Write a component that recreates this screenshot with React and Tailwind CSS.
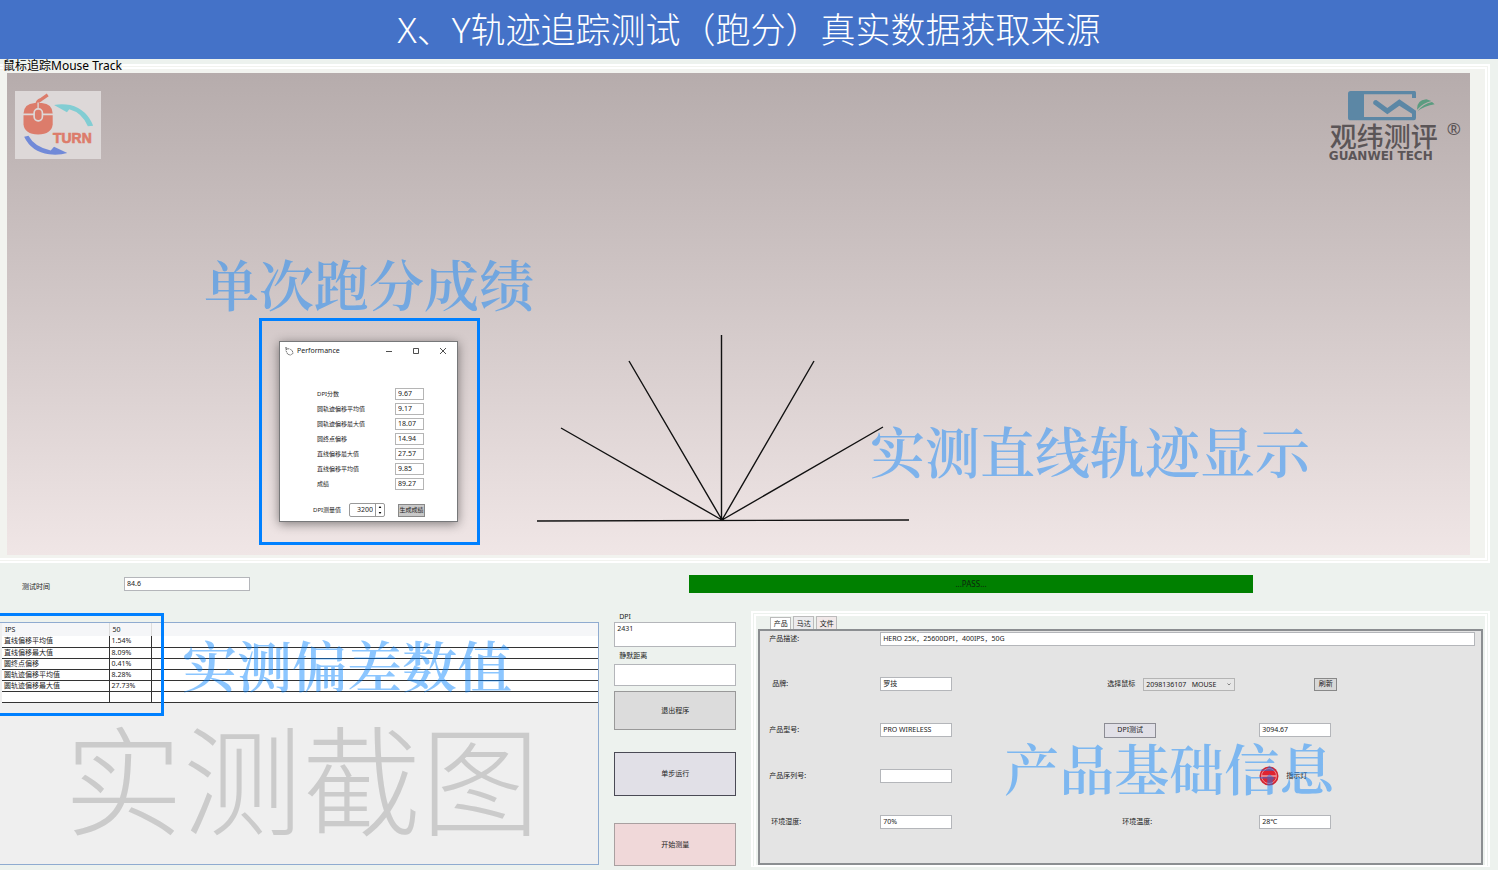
import clsx from "clsx";

const scores = [
  { id: "dpi", label: "DPI分数", value: "9.67" },
  { id: "circle-avg", label: "圆轨迹偏移平均值", value: "9.17" },
  { id: "circle-max", label: "圆轨迹偏移最大值", value: "18.07" },
  { id: "circle-end", label: "圆终点偏移", value: "14.94" },
  { id: "line-max", label: "直线偏移最大值", value: "27.57" },
  { id: "line-avg", label: "直线偏移平均值", value: "9.85" },
  { id: "total", label: "成绩", value: "89.27" },
];

const deviations = [
  ["直线偏移平均值", "1.54%"],
  ["直线偏移最大值", "8.09%"],
  ["圆终点偏移", "0.41%"],
  ["圆轨迹偏移平均值", "8.28%"],
  ["圆轨迹偏移最大值", "27.73%"],
  ["", ""],
];

const Caption = ({ className, children }) => (
  <p
    className={clsx(
      "pointer-events-none absolute whitespace-nowrap font-['Noto_Serif_CJK_SC','Noto_Sans_CJK_SC',serif] text-[55px] font-semibold leading-[60px] text-[#0080ff]/45",
      className
    )}
  >
    {children}
  </p>
);

const TextBox = ({ className, ...props }) => (
  <input
    type="text"
    className={clsx("rounded-none border border-[#b4b6ba] bg-white px-[2px] leading-[10px]", className)}
    {...props}
  />
);

const TurnLogo = () => (
  <svg viewBox="46 122 258 205" className="h-[68px] w-[86px] bg-[#ddd8d8]" role="img" aria-label="TURN">
    <path d="M112 162 Q112 152 124 148 L144 134" fill="none" stroke="#dc7c6b" strokeWidth="10" />
    <path d="M71 190 Q72 160 105 158 H126 Q158 160 159 190Z" fill="#dc7c6b" />
    <path d="M71 195 H159 V222 Q156 252 115 253 Q74 252 71 222Z" fill="#dc7c6b" />
    <rect x="103" y="176" width="25" height="36" rx="12" fill="#dc7c6b" stroke="#ddd8d8" strokeWidth="5" />
    <path d="M115 157 V176" stroke="#ddd8d8" strokeWidth="4" />
    <path d="M163 164 Q186 160 212 164 Q263 178 281 227 L265 228 Q247 187 209 177 L202 186 Z" fill="#82cdd3" />
    <path d="M73 260 L86 257 Q104 291 153 301 L163 290 L203 309 Q180 316 148 313 Q95 306 73 260Z" fill="#718ad8" />
    <text x="160" y="280" fontSize="42" fontWeight="900" fill="#dc7c6b" stroke="#dc7c6b" strokeWidth="2" className="font-['Liberation_Sans',sans-serif]">
      TURN
    </text>
  </svg>
);

const BrandLogo = () => (
  <div className="flex h-[72px] text-[#5b5557]">
    <div className="w-[116px]">
      <svg viewBox="204 122 264 96" className="ml-[20px] h-[32px] w-[88px]">
        <path
          d="M212 122 H404 Q408 122 408 127 V143 H396 V132 H252 V200 H396 V190 L358 166 L322 192 L280 161 Q277 150 289 149 L322 173 L358 147 L408 181 V203 Q408 210 401 210 H212 Q204 210 204 202 V130 Q204 122 212 122Z"
          fill="#5c87a5"
        />
        <path d="M411 178 Q409 150 439 147 L454 152 Q430 157 411 178Z M413 183 Q429 160 456 155 L464 162 Q434 166 413 183Z" fill="#5b9c80" />
      </svg>
      <p className="pl-[2px] text-[27px] font-medium leading-[28px]">观纬测评</p>
      <p className="whitespace-nowrap pl-[1px] font-['DejaVu_Sans',sans-serif] text-[12px] font-bold leading-[10px]">GUANWEI TECH</p>
    </div>
    <span className="mt-[28px] pl-[3px] text-[17px] leading-[20px]">®</span>
  </div>
);

const TrackLines = () => (
  <svg viewBox="530 330 385 200" className="absolute left-[523px] top-[257px] h-[200px] w-[385px]" stroke="#111" strokeWidth="1.4">
    <path
      d="M537 521 L909 520 M722 520 L561 428 M722 520 L629 361 M721.500 520 V335 M722 520 L814 361 M722 520 L883 427"
      fill="none"
    />
  </svg>
);

const PerformanceWindow = () => (
  <div className="h-[181px] w-[179px] border border-[#77787a] bg-white text-[7px] text-[#222] shadow-[0_2px_10px_rgba(0,0,0,0.45)]">
    <div className="flex h-[18px] items-center pl-[5px] pr-[10px]">
      <svg viewBox="0 0 10 10" className="mr-[3px] size-[9px]" fill="none" stroke="#444" strokeWidth="0.8">
        <path d="M1 0 L1 3 L4 2 L1 1 M1 4 L3 8 L6 9 L9 7 L8 4 L5 2" strokeDasharray="2 0.5" />
      </svg>
      <span>Performance</span>
      <div className="ml-auto flex gap-[19px]">
        <button type="button" aria-label="Minimize">
          <svg viewBox="0 0 8 8" className="size-[8px]" stroke="#222" strokeWidth="0.8"><path d="M1 4.500 H7" /></svg>
        </button>
        <button type="button" aria-label="Maximize">
          <svg viewBox="0 0 8 8" className="size-[8px]" stroke="#222" strokeWidth="0.8" fill="none"><path d="M1.500 1.500 H6.500 V6.500 H1.500Z" /></svg>
        </button>
        <button type="button" aria-label="Close">
          <svg viewBox="0 0 8 8" className="size-[8px]" stroke="#222" strokeWidth="0.8"><path d="M1 1 L7 7 M7 1 L1 7" /></svg>
        </button>
      </div>
    </div>
    <div className="pl-[37px] pr-[33px] pt-[26px]">
      {scores.map((s) => (
        <div key={s.id} className="flex h-[15px] items-center justify-between">
          <label htmlFor={s.id} className="whitespace-nowrap text-[6px] leading-[8px]">{s.label}</label>
          <input id={s.id} defaultValue={s.value} className="h-[12px] w-[29px] border border-[#b5b5b5] px-[2px]" />
        </div>
      ))}
    </div>
    <div className="flex items-center pl-[33px] pt-[12px]">
      <label htmlFor="dpi-measure" className="w-[36px] whitespace-nowrap text-[6px]">DPI测量值</label>
      <div className="flex h-[14px] w-[36px] rounded-[2px] border border-[#999]">
        <input id="dpi-measure" defaultValue="3200" className="w-[25px] pr-[2px] text-right" />
        <div className="flex flex-1 flex-col border-l border-[#999]">
          <button type="button" aria-label="Increase" className="flex h-[6px] items-center justify-center">
            <svg viewBox="0 0 4 3" className="h-[2px] w-[4px]"><path d="M0 3 L2 0 L4 3Z" /></svg>
          </button>
          <button type="button" aria-label="Decrease" className="flex h-[6px] items-center justify-center">
            <svg viewBox="0 0 4 3" className="h-[2px] w-[4px]"><path d="M0 0 L2 3 L4 0Z" /></svg>
          </button>
        </div>
      </div>
      <button type="button" className="ml-[13px] h-[13px] w-[27px] whitespace-nowrap border border-[#888] bg-[#c8c8c8] text-[6px] leading-[10px]">
        生成成绩
      </button>
    </div>
  </div>
);

const MouseTrack = () => (
  <fieldset className="mr-[8px] border-[5px] border-l-0 border-double border-white bg-[#f2f3ef] pb-[3px] pl-[7px] pr-[15px]">
    <legend className="-ml-[4px] text-[12px] leading-[14px] text-black">鼠标追踪Mouse Track</legend>
    <div className="relative h-[482px] bg-linear-to-b from-[#b6acac] to-[#f0e6e6]">
      <div className="flex justify-between pl-[8px] pr-[9px] pt-[18px]">
        <TurnLogo />
        <BrandLogo />
      </div>
      <TrackLines />
      <div className="absolute left-[252px] top-[245px] border-[3px] border-[#0080ff] py-[20px] pl-[17px] pr-[19px]">
        <PerformanceWindow />
      </div>
      <Caption className="left-[197px] top-[180px]">单次跑分成绩</Caption>
      <Caption className="left-[863px] top-[347px]">实测直线轨迹显示</Caption>
    </div>
  </fieldset>
);

const DeviationPanel = () => (
  <div className="relative mb-[2px] mt-[11px] border border-l-0 border-[#8fabd0] bg-[#efefef] pl-[2px]">
    <table className="w-full table-fixed border-collapse bg-white text-left text-[7px] leading-[10px]">
      <thead>
        <tr className="h-[13px] bg-[#f5f6f8]">
          <th className="w-[107px] border-r border-[#ddd] px-[3px] font-normal">IPS</th>
          <th className="w-[42px] border-r border-[#ddd] px-[3px] font-normal">50</th>
          <td />
        </tr>
      </thead>
      <tbody>
        {deviations.map(([name, value], i) => (
          <tr key={i} className="h-[11px] border-b border-[#333]">
            <td className="border-r border-[#333] px-[2px] py-0">{name}</td>
            <td className="border-r border-[#333] px-[2px] py-0">{value}</td>
            <td className="p-0" />
          </tr>
        ))}
      </tbody>
    </table>
    <div className="pointer-events-none absolute -top-[10px] left-0 h-[103px] w-[164px] border-[3px] border-l-0 border-[#0080ff]" />
    <Caption className="left-[182px] top-[11px]">实测偏差数值</Caption>
    <p className="pointer-events-none absolute left-[64px] top-[98px] whitespace-nowrap text-[119px] font-light leading-[120px] text-[#cbcbcb]">
      实测截图
    </p>
  </div>
);

const Controls = () => (
  <div className="flex flex-col">
    <label htmlFor="dpi-value" className="pl-[5px] leading-[11px]">DPI</label>
    <TextBox id="dpi-value" defaultValue="2431" className="h-[25px] pb-[12px]" />
    <label htmlFor="silent" className="pl-[5px] leading-[17px]">静默距离</label>
    <TextBox id="silent" className="h-[22px]" />
    <button type="button" className="mt-[5px] h-[39px] border border-[#999] bg-[#dcdcdc]">退出程序</button>
    <button type="button" className="mt-[22px] h-[44px] border border-[#4a4a55] bg-[#e1e0e7]">单步运行</button>
    <button type="button" className="mt-[27px] h-[43px] border border-[#a9a0a0] bg-[#f0d8d9]">开始测量</button>
  </div>
);

const ProductPanel = () => (
  <div className="mr-[8px] flex flex-col border-[5px] border-b-2 border-double border-white px-[2px]">
    <div role="tablist" className="flex h-[13px] items-end gap-[2px] pl-[12px] leading-[11px]">
      <button type="button" role="tab" aria-selected="true" className="h-[12px] w-[21px] border border-b-0 border-[#bbb] bg-white">产品</button>
      <button type="button" role="tab" aria-selected="false" className="h-[13px] w-[21px] border border-b-0 border-[#bbb] bg-[#ebebed]">马达</button>
      <button type="button" role="tab" aria-selected="false" className="h-[13px] w-[21px] border border-b-0 border-[#bbb] bg-[#f1e9e9]">文件</button>
    </div>
    <div className="relative flex-1 border-2 border-[#8b8e91] bg-[#e4e4e4] pl-[9px] pr-[6px]">
      <div className="flex h-[15px] items-center pt-[1px]">
        <label htmlFor="desc" className="w-[111px]">产品描述:</label>
        <TextBox id="desc" defaultValue="HERO 25K，25600DPI，400IPS，50G" className="h-[14px] flex-1 pb-[2px]" />
      </div>
      <div className="mt-[15px] grid h-[184px] grid-cols-[111px_72px_152px_155px_1fr] grid-rows-4 items-center">
        <label htmlFor="brand" className="pl-[3px]">品牌:</label>
        <TextBox id="brand" defaultValue="罗技" className="h-[14px] pb-[2px]" />
        <span />
        <div className="flex items-center gap-[8px] pl-[3px]">
          <label htmlFor="mouse">选择鼠标</label>
          <div className="relative">
            <select id="mouse" className="h-[13px] w-[92px] appearance-none border border-[#b4b4b4] bg-[#e6e6e6] pl-[2px] leading-[11px]">
              <option>2098136107&nbsp;&nbsp; MOUSE</option>
            </select>
            <svg viewBox="0 0 4 3" className="pointer-events-none absolute right-[4px] top-[5px] h-[3px] w-[4px]" fill="none" stroke="#555" strokeWidth="0.7">
              <path d="M0.500 0.500 L2 2 L3.500 0.500" />
            </svg>
          </div>
        </div>
        <button type="button" className="ml-[55px] h-[13px] w-[23px] border border-[#888] bg-[#d8d8d8] leading-[10px]">刷新</button>

        <label htmlFor="model">产品型号:</label>
        <TextBox id="model" defaultValue="PRO WIRELESS" className="h-[14px] pb-[2px]" />
        <span />
        <button type="button" className="h-[15px] w-[52px] border border-[#8c8c94] bg-[#e1e0e7] leading-[12px]">DPI测试</button>
        <TextBox defaultValue="3094.67" aria-label="DPI测试" className="h-[14px] w-[72px] pb-[2px]" />

        <label htmlFor="serial">产品序列号:</label>
        <TextBox id="serial" className="h-[14px]" />
        <span />
        <span />
        <div className="flex items-center gap-[7px]">
          <svg viewBox="0 0 20 20" className="size-[20px]">
            <circle cx="10" cy="10" r="9.500" fill="#d3232f" />
            <circle cx="10" cy="10" r="7.500" fill="#e02331" stroke="#f2b6bb" strokeWidth="0.7" />
            <path d="M3 10 H17" stroke="#f2dcdc" />
          </svg>
          <span>指示灯</span>
        </div>

        <label htmlFor="humidity" className="pl-[2px]">环境湿度:</label>
        <TextBox id="humidity" defaultValue="70%" className="h-[14px] pb-[2px]" />
        <span />
        <label htmlFor="temperature" className="pl-[18px]">环境温度:</label>
        <TextBox id="temperature" defaultValue="28℃" className="h-[14px] w-[72px] pb-[2px]" />
      </div>
      <Caption className="left-[244px] top-[106px]">产品基础信息</Caption>
    </div>
  </div>
);

const App = () => {
  return (
    <div className="flex min-h-screen flex-col border-r-2 border-white bg-[#edf2ee] font-['Noto_Sans','Noto_Sans_CJK_SC',sans-serif] text-[7px] leading-[12px] text-[#222]">
      <header className="flex h-[59px] items-center justify-center bg-[#4472c8]">
        <h1 className="text-[35px] font-light leading-[50px] text-white">X、Y轨迹追踪测试（跑分）真实数据获取来源</h1>
      </header>

      <MouseTrack />

      <div className="flex h-[48px] items-center pb-[6px] pl-[22px]">
        <label htmlFor="time" className="w-[102px] pt-[6px]">测试时间</label>
        <TextBox id="time" defaultValue="84.6" className="h-[14px] w-[126px] pb-[2px]" />
        <div role="status" className="ml-[439px] mr-[245px] h-[18px] flex-1 bg-[#008000] text-center text-[8px] leading-[18px] text-[#0d260d]">
          ...PASS...
        </div>
      </div>

      <div className="grid flex-1 grid-cols-[40%_122px_1fr] gap-x-[15px] pb-[3px]">
        <DeviationPanel />
        <Controls />
        <ProductPanel />
      </div>
    </div>
  );
};

export default App;
